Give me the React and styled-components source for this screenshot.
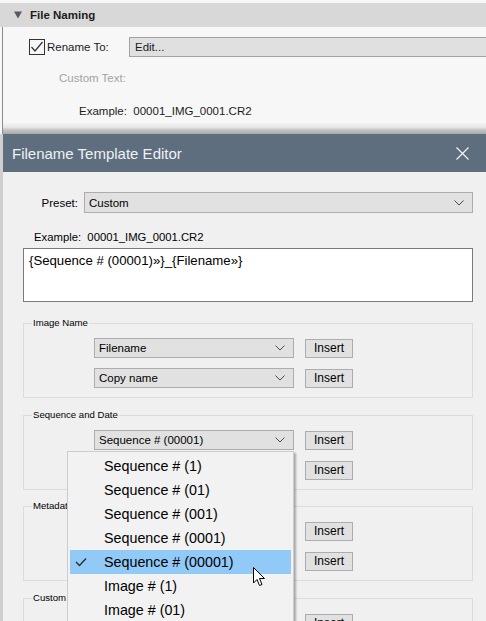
import React from "react";
import styled, { createGlobalStyle } from "styled-components";

const Global = createGlobalStyle`
  html, body { margin: 0; padding: 0; background: #f0f0f0; }
  body { font-family: "Liberation Sans", Arial, sans-serif; }
  * { box-sizing: border-box; }
`;

const Screen = styled.div`
  position: relative;
  width: 486px;
  height: 621px;
  overflow: hidden;
  display: flex;
  flex-direction: column;
  background: #f0f0f0;
`;

/* ---------- top panel ---------- */
const TopPanel = styled.div`
  height: 134px;
  flex: none;
  background: #f7f7f7;
  padding-top: 3px;
  display: flex;
  flex-direction: column;
`;

const PanelHeader = styled.div`
  height: 24px;
  background: #d8d8d8;
  display: flex;
  align-items: center;
  padding-left: 14px;
  gap: 8px;
  font-size: 11.5px;
  font-weight: bold;
  color: #1c1c1c;
`;

const PanelBody = styled.div`
  flex: 1;
  margin-left: 2px;
  border-left: 1px solid #8c8c8c;
  display: flex;
  flex-direction: column;
`;

const RenameRow = styled.div`
  margin-top: 10px;
  height: 20px;
  display: flex;
  align-items: center;
  padding-left: 26px;
  font-size: 11.5px;
  color: #1c1c1c;
`;

const CheckBox = styled.div`
  width: 16px;
  height: 16px;
  border: 1px solid #333;
  background: #f7f7f7;
  display: flex;
  align-items: center;
  justify-content: center;
  margin-right: 2px;
`;

const RenameLabel = styled.span`
  width: 82px;
  flex: none;
`;

const EditField = styled.div`
  flex: 1;
  height: 20px;
  margin-right: -2px;
  background: #e0e0e0;
  border: 1px solid #a2a2a2;
  border-right: none;
  display: flex;
  align-items: center;
  padding-left: 5px;
`;

const PanelLine = styled.div`
  margin-top: ${(p) => p.$top}px;
  padding-left: ${(p) => p.$left}px;
  height: 16px;
  line-height: 16px;
  font-size: 11.5px;
  color: ${(p) => (p.$dim ? "#a3a3a3" : "#1c1c1c")};
`;

const PanelShade = styled.div`
  margin-top: auto;
  height: 11px;
  background: linear-gradient(#f4f4f4 0%, #e6e6e6 40%, #c6c6c6 60%, #a9a9a9 100%);
`;

/* ---------- dialog ---------- */
const Dialog = styled.div`
  flex: 1;
  border-left: 3px solid #cfcfcf;
  display: flex;
  flex-direction: column;
  background: #f0f0f0;
`;

const TitleBar = styled.div`
  height: 38px;
  flex: none;
  background: #5f6e7f;
  display: flex;
  align-items: center;
  justify-content: space-between;
  padding: 0 17px 0 9px;
  color: #eef1f4;
  font-size: 15px;
`;

const DialogBody = styled.div`
  padding: 0 13px 0 20px;
  display: flex;
  flex-direction: column;
`;

const PresetRow = styled.div`
  margin-top: 20px;
  height: 21px;
  display: flex;
  align-items: center;
  font-size: 11.5px;
`;

const PresetLabel = styled.span`
  width: 61px;
  text-align: right;
  padding-right: 6px;
`;

const Select = styled.div`
  flex: ${(p) => (p.$w ? "none" : "1")};
  width: ${(p) => (p.$w ? `${p.$w}px` : "auto")};
  height: ${(p) => p.$h || 20}px;
  background: #e1e1e1;
  border: 1px solid #adadad;
  display: flex;
  align-items: center;
  justify-content: space-between;
  padding: 0 8px 0 4px;
  font-size: 11.5px;
  color: #000;
`;

const ExampleLine = styled.div`
  margin-top: 16px;
  padding-left: 11px;
  height: 16px;
  line-height: 16px;
  font-size: 11.3px;
`;

const TemplateBox = styled.div`
  margin-top: 3px;
  height: 54px;
  background: #fff;
  border: 1px solid #7a7a7a;
  padding: 4px 5px;
  font-size: 13.2px;
  line-height: 16px;
  color: #000;
`;

const Group = styled.div`
  position: relative;
  margin-top: ${(p) => p.$top}px;
  height: 75px;
  flex: none;
  border: 1px solid #dcdcdc;
  padding: 14px 0 0 70px;
  display: flex;
  flex-direction: column;
  gap: 10px;
`;

const Legend = styled.span`
  position: absolute;
  left: 8px;
  top: -7px;
  padding: 0 1px;
  background: #f0f0f0;
  font-size: 9.6px;
  line-height: 12px;
  color: #000;
`;

const GroupRow = styled.div`
  display: flex;
  align-items: center;
  gap: 11px;
  height: 20px;
`;

const InsertButton = styled.div`
  width: 48px;
  height: 19px;
  background: #e1e1e1;
  border: 1px solid #adadad;
  display: flex;
  align-items: center;
  justify-content: center;
  font-size: 12px;
  color: #000;
`;

const Spacer = styled.div`
  width: 200px;
  flex: none;
`;

/* ---------- dropdown menu ---------- */
const Menu = styled.div`
  position: absolute;
  left: 67px;
  top: 451px;
  width: 227px;
  height: 190px;
  background: #f2f2f2;
  border: 1px solid #cccccc;
  padding: 2px 2px;
  box-shadow: 2px 2px 2px rgba(0, 0, 0, 0.3);
`;

const MenuItem = styled.div`
  position: relative;
  height: 24px;
  display: flex;
  align-items: center;
  padding-left: 34px;
  font-size: 14.3px;
  color: #000;
  background: ${(p) => (p.$active ? "#91c9f7" : "transparent")};
`;

const CheckMark = styled.svg`
  position: absolute;
  left: 5px;
  top: 7px;
`;

const Cursor = styled.svg`
  position: absolute;
  left: 253px;
  top: 567px;
`;

const Chevron = () => (
  <svg width="10" height="6" viewBox="0 0 10 6">
    <path d="M0.5 0.5 L5 5 L9.5 0.5" fill="none" stroke="#4a4a4a" strokeWidth="1" />
  </svg>
);

const imageRows = ["Filename", "Copy name"];

const menuItems = [
  "Sequence # (1)",
  "Sequence # (01)",
  "Sequence # (001)",
  "Sequence # (0001)",
  "Sequence # (00001)",
  "Image # (1)",
  "Image # (01)",
];

export default function App() {
  return (
    <>
      <Global />
      <Screen>
        <TopPanel>
          <PanelHeader>
            <svg width="8" height="8" viewBox="0 0 8 8">
              <path d="M0 0.5 H8 L4 7.5 Z" fill="#5a5a5a" />
            </svg>
            File Naming
          </PanelHeader>
          <PanelBody>
            <RenameRow>
              <CheckBox>
                <svg width="14" height="12" viewBox="0 0 14 12">
                  <path d="M1.5 6 L5 10 L12.5 1" fill="none" stroke="#333" strokeWidth="1.2" />
                </svg>
              </CheckBox>
              <RenameLabel>Rename To:</RenameLabel>
              <EditField>Edit...</EditField>
            </RenameRow>
            <PanelLine $top={13} $left={56} $dim>
              Custom Text:
            </PanelLine>
            <PanelLine $top={17} $left={76}>
              Example:&nbsp; 00001_IMG_0001.CR2
            </PanelLine>
            <PanelShade />
          </PanelBody>
        </TopPanel>

        <Dialog>
          <TitleBar>
            <span>Filename Template Editor</span>
            <svg width="13" height="13" viewBox="0 0 13 13">
              <path d="M0.5 0.5 L12.5 12.5 M12.5 0.5 L0.5 12.5" stroke="#f2f4f6" strokeWidth="1.2" />
            </svg>
          </TitleBar>
          <DialogBody>
            <PresetRow>
              <PresetLabel>Preset:</PresetLabel>
              <Select $h={21}>
                <span>Custom</span>
                <Chevron />
              </Select>
            </PresetRow>
            <ExampleLine>Example:&nbsp; 00001_IMG_0001.CR2</ExampleLine>
            <TemplateBox>{"{Sequence # (00001)»}_{Filename»}"}</TemplateBox>

            <Group $top={21}>
              <Legend>Image Name</Legend>
              {imageRows.map((r) => (
                <GroupRow key={r}>
                  <Select $w={200}>
                    <span>{r}</span>
                    <Chevron />
                  </Select>
                  <InsertButton>Insert</InsertButton>
                </GroupRow>
              ))}
            </Group>

            <Group $top={17}>
              <Legend>Sequence and Date</Legend>
              <GroupRow>
                <Select $w={200}>
                  <span>Sequence # (00001)</span>
                  <Chevron />
                </Select>
                <InsertButton>Insert</InsertButton>
              </GroupRow>
              <GroupRow>
                <Spacer />
                <InsertButton>Insert</InsertButton>
              </GroupRow>
            </Group>

            <Group $top={16}>
              <Legend>Metadata</Legend>
              <GroupRow>
                <Spacer />
                <InsertButton>Insert</InsertButton>
              </GroupRow>
              <GroupRow>
                <Spacer />
                <InsertButton>Insert</InsertButton>
              </GroupRow>
            </Group>

            <Group $top={17}>
              <Legend>Custom</Legend>
              <GroupRow>
                <Spacer />
                <InsertButton>Insert</InsertButton>
              </GroupRow>
            </Group>
          </DialogBody>
        </Dialog>

        <Menu>
          {menuItems.map((m) => (
            <MenuItem key={m} $active={m === "Sequence # (00001)"}>
              {m === "Sequence # (00001)" && (
                <CheckMark width="12" height="10" viewBox="0 0 12 10">
                  <path d="M1 5 L4.5 8.5 L11 1.5" fill="none" stroke="#2b2b2b" strokeWidth="1.3" />
                </CheckMark>
              )}
              {m}
            </MenuItem>
          ))}
        </Menu>

        <Cursor width="13" height="20" viewBox="0 0 13 20">
          <path
            d="M0.5 0.5 L0.5 16 L4 12.5 L6.5 18.5 L9 17.5 L6.5 11.5 L11.5 11.5 Z"
            fill="#fff"
            stroke="#000"
            strokeWidth="1"
            strokeLinejoin="round"
          />
        </Cursor>
      </Screen>
    </>
  );
}
